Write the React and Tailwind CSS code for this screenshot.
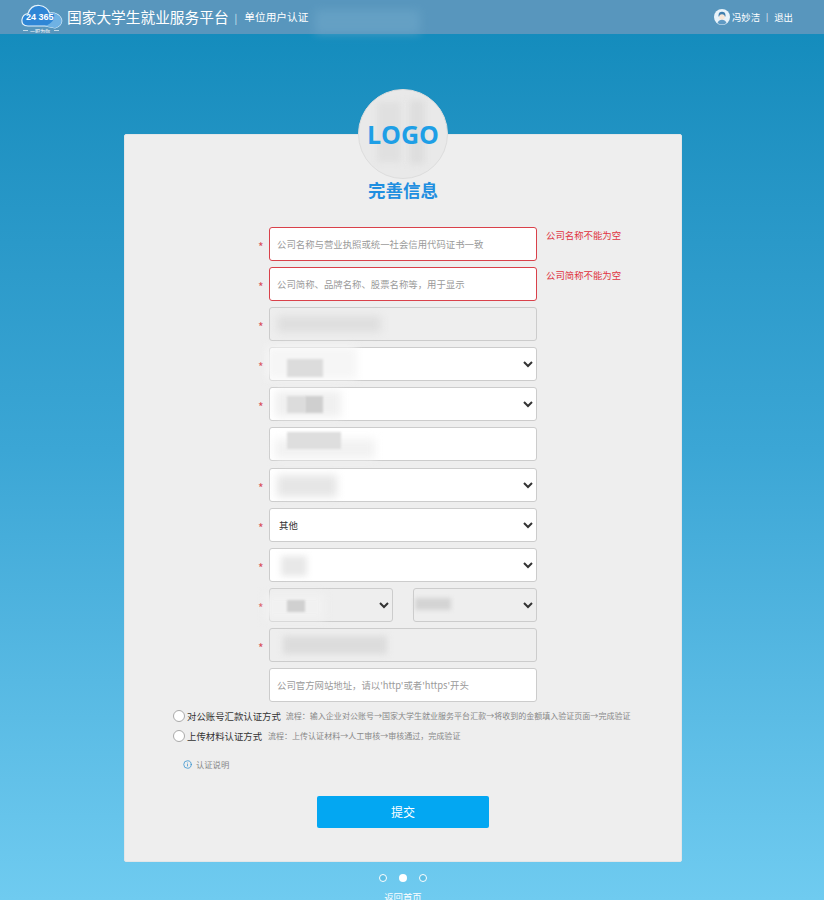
import React from "react";
import { Info } from "lucide-react";

const font = { fontFamily: '"Noto Sans CJK SC","Liberation Sans",sans-serif' };

function Smudges({ children }) {
  return <div className="pointer-events-none absolute inset-0 overflow-visible">{children}</div>;
}

function Row({ star = true, error, children, smudge }) {
  return (
    <div className="flex h-[34px] items-center">
      <div className="relative flex h-full w-[268px] items-center">
        <div className="absolute left-[-11px] top-[14px] text-[12px] leading-[12px] text-[#d9505a]">{star ? "*" : ""}</div>
        {children}
        {smudge ? <Smudges>{smudge}</Smudges> : null}
      </div>
      {error ? <div className="ml-[9px] mt-[-18px] text-[9.400px] leading-[12px] text-[#e0343e]">{error}</div> : null}
    </div>
  );
}

const inputBase = "h-full w-full rounded-[3px] border px-[7px] text-[9.400px] text-[#333] outline-none placeholder:text-[#9a9a9a]";
const selectBase = "h-full w-full rounded-[3px] border border-[#cccccc] pl-[5px] text-[9.400px] text-[#333] outline-none";

function Sel({ disabled, value = "" }) {
  return (
    <select disabled={disabled} defaultValue={value} style={font} className={selectBase + (disabled ? " bg-[#eeeeee] opacity-100" : " bg-white")}>
      <option value={value}>{value}</option>
    </select>
  );
}

function CloudLogo() {
  return (
    <svg width="42" height="32" viewBox="0 0 42 32" className="shrink-0">
      <path d="M7 25C2 25 .5 22 1 18.500 1.500 15 4 13 7 12.500 9 7 13.500 4 18.500 4.500 23 5 27 8 28.500 12 33 11 39 13.500 40.500 18.500 41.500 22.500 38 26 34 27L24 25z" fill="#2f86d6" stroke="#e3f2fb" strokeWidth="1.200" />
      <path d="M24 25l10 2c4-1 7.500-4.500 6.500-8.500C39.500 15 36 12.800 32.500 12 35 17 31 23 24 25z" fill="#6fb2e4" />
      <text x="5" y="19" fontSize="9" fontWeight="700" fill="#ffffff" fontFamily="Liberation Sans, sans-serif">24 365</text>
      <path d="M2 29.500h5M33 29.500h5" stroke="#dcecf6" strokeWidth="0.800" />
      <text x="9" y="31.500" fontSize="5" fill="#ffffff" style={font}>一职为你</text>
    </svg>
  );
}

function UserIcon() {
  return (
    <svg width="16" height="16" viewBox="0 0 16 16" className="shrink-0">
      <circle cx="8" cy="8" r="8" fill="#e8f3fa" />
      <path d="M4.500 6.500C4.500 3.800 6 2.800 8 2.800s3.500 1 3.500 3.700v1H4.500z" fill="#3f7fae" />
      <circle cx="8" cy="8" r="2.800" fill="#f7e6d7" />
      <path d="M3.500 14c.8-2.500 2.500-3.300 4.500-3.300s3.700.8 4.500 3.300a8 8 0 0 1-9 0z" fill="#5f9ac4" />
    </svg>
  );
}

export default function App() {
  return (
    <div style={font} className="relative h-[900px] w-[824px] overflow-hidden bg-gradient-to-b from-[#0f8abb] via-[#3ba6d5] to-[#6fcbf0]">
      <header className="relative flex h-[34px] items-center justify-between bg-[#5896bd] pl-[21px] pr-[31px] text-white">
        <div className="flex items-center">
          <CloudLogo />
          <span className="ml-[4px] text-[14.700px] leading-[20px]">国家大学生就业服务平台</span>
          <span className="ml-[6px] text-[10px] text-[#dbe9f2]">|</span>
          <span className="ml-[7px] text-[10.700px]">单位用户认证</span>
        </div>
        <div className="flex items-center text-[9.400px]">
          <UserIcon />
          <span className="ml-[2px]">冯妙洁</span>
          <span className="mx-[6px] text-[8px]">|</span>
          <span>退出</span>
        </div>
        <div className="absolute left-[315px] top-[10px] h-[24px] w-[105px] bg-[#6ea8ca] opacity-60 blur-[5px]"></div>
      </header>

      <main className="flex flex-col items-center pr-[18px] pt-[100px]">
        <section className="relative h-[728px] w-[558px] rounded-[2px] border border-[#e2e6e8] bg-[#eeeeee]">
          <div className="absolute left-[233px] top-[-46px] flex h-[90px] w-[90px] items-center justify-center overflow-hidden rounded-full border border-[#dddddd] bg-[#e9e9e9]">
            <div className="absolute left-[18px] top-[12px] h-[60px] w-[24px] bg-[#e0e0e0] blur-[3px]"></div>
            <div className="absolute left-[50px] top-[10px] h-[64px] w-[16px] bg-[#dedede] blur-[3px]"></div>
            <span style={{ fontFamily: '"Open Sans",sans-serif' }} className="relative text-[25px] font-bold leading-none text-[#1e9fe6]">LOGO</span>
          </div>

          <h1 className="pt-[44px] text-center text-[17.500px] font-bold leading-[22px] text-[#1f8fe0]">完善信息</h1>

          <form className="mt-[26px] flex flex-col gap-[6.100px] pl-[144px]">
            <Row error="公司名称不能为空">
              <input style={font} placeholder="公司名称与营业执照或统一社会信用代码证书一致" className={inputBase + " border-[#d9414a] bg-white"} />
            </Row>
            <Row error="公司简称不能为空">
              <input style={font} placeholder="公司简称、品牌名称、股票名称等，用于显示" className={inputBase + " border-[#d9414a] bg-white"} />
            </Row>
            <Row smudge={<div className="absolute left-[8px] top-[9px] h-[16px] w-[104px] bg-[#dedede] blur-[4px]"></div>}>
              <input disabled className={inputBase + " border-[#cccccc] bg-[#eeeeee]"} />
            </Row>
            <Row smudge={<><div className="absolute left-[-2px] top-[0px] h-[32px] w-[90px] bg-[#f6f6f6] blur-[4px]"></div><div className="absolute left-[18px] top-[12px] h-[18px] w-[36px] bg-[#dcdcdc] blur-[1px]"></div></>}>
              <Sel />
            </Row>
            <Row smudge={<><div className="absolute left-[6px] top-[4px] h-[26px] w-[66px] bg-[#f0f0f0] blur-[4px]"></div><div className="absolute left-[18px] top-[9px] h-[17px] w-[18px] bg-[#dcdcdc] blur-[1px]"></div><div className="absolute left-[36px] top-[9px] h-[17px] w-[18px] bg-[#cfcfcf] blur-[1px]"></div></>}>
              <Sel />
            </Row>
            <Row star={false} smudge={<><div className="absolute left-[6px] top-[12px] h-[20px] w-[100px] bg-[#f2f2f2] blur-[4px]"></div><div className="absolute left-[18px] top-[5px] h-[17px] w-[54px] bg-[#dedede] blur-[1px]"></div></>}>
              <input disabled className={inputBase + " border-[#cccccc] bg-white"} />
            </Row>
            <Row smudge={<div className="absolute left-[8px] top-[7px] h-[22px] w-[60px] bg-[#e6e6e6] blur-[4px]"></div>}>
              <Sel />
            </Row>
            <Row>
              <Sel value="其他" />
            </Row>
            <Row smudge={<div className="absolute left-[12px] top-[8px] h-[20px] w-[26px] bg-[#e8e8e8] blur-[3px]"></div>}>
              <Sel />
            </Row>
            <Row smudge={<><div className="absolute left-[-4px] top-[6px] h-[26px] w-[60px] bg-[#f1f1f1] blur-[4px]"></div><div className="absolute left-[18px] top-[12px] h-[12px] w-[18px] bg-[#d0d0d0] blur-[1px]"></div><div className="absolute left-[146px] top-[10px] h-[12px] w-[36px] bg-[#d4d4d4] blur-[2px]"></div></>}>
              <div className="flex h-full w-full justify-between">
                <div className="w-[124px]"><Sel disabled /></div>
                <div className="w-[124px]"><Sel disabled /></div>
              </div>
            </Row>
            <Row smudge={<div className="absolute left-[14px] top-[8px] h-[18px] w-[104px] bg-[#dcdcdc] blur-[3px]"></div>}>
              <input disabled className={inputBase + " border-[#cccccc] bg-[#eeeeee]"} />
            </Row>
            <Row star={false}>
              <input style={font} placeholder="公司官方网站地址，请以'http'或者'https'开头" className={inputBase + " border-[#cccccc] bg-white"} />
            </Row>
          </form>

          <div className="mt-[7px] flex flex-col gap-[6px] pl-[48px]">
            <div className="flex h-[14px] items-center">
              <span className="h-[12px] w-[12px] rounded-full border border-[#aaaaaa] bg-white"></span>
              <span className="ml-[2px] text-[9.400px] text-[#333333]">对公账号汇款认证方式</span>
              <span className="ml-[5px] text-[8.020px] text-[#888888]">流程：输入企业对公账号→国家大学生就业服务平台汇款→将收到的金额填入验证页面→完成验证</span>
            </div>
            <div className="flex h-[14px] items-center">
              <span className="h-[12px] w-[12px] rounded-full border border-[#aaaaaa] bg-white"></span>
              <span className="ml-[2px] text-[9.400px] text-[#333333]">上传材料认证方式</span>
              <span className="ml-[6px] text-[8.020px] text-[#888888]">流程：上传认证材料→人工审核→审核通过，完成验证</span>
            </div>
          </div>

          <div className="ml-[58px] mt-[15px] flex items-center">
            <Info size={9} strokeWidth={2} className="text-[#2f8fce]" />
            <span className="ml-[4px] text-[8.300px] text-[#888888]">认证说明</span>
          </div>

          <div className="mt-[26px] flex justify-center">
            <button type="button" className="h-[32px] w-[172px] rounded-[2px] bg-[#03a7f2] text-[12px] text-white">提交</button>
          </div>
        </section>

        <div className="mt-[12px] flex items-center gap-[12px]">
          <span className="h-[8px] w-[8px] rounded-full border border-white bg-[#5fbfe4]"></span>
          <span className="h-[8px] w-[8px] rounded-full bg-white"></span>
          <span className="h-[8px] w-[8px] rounded-full border border-white bg-[#5fbfe4]"></span>
        </div>
        <div className="mt-[9px] text-[9.400px] leading-[12px] text-white">返回首页</div>
      </main>
    </div>
  );
}
